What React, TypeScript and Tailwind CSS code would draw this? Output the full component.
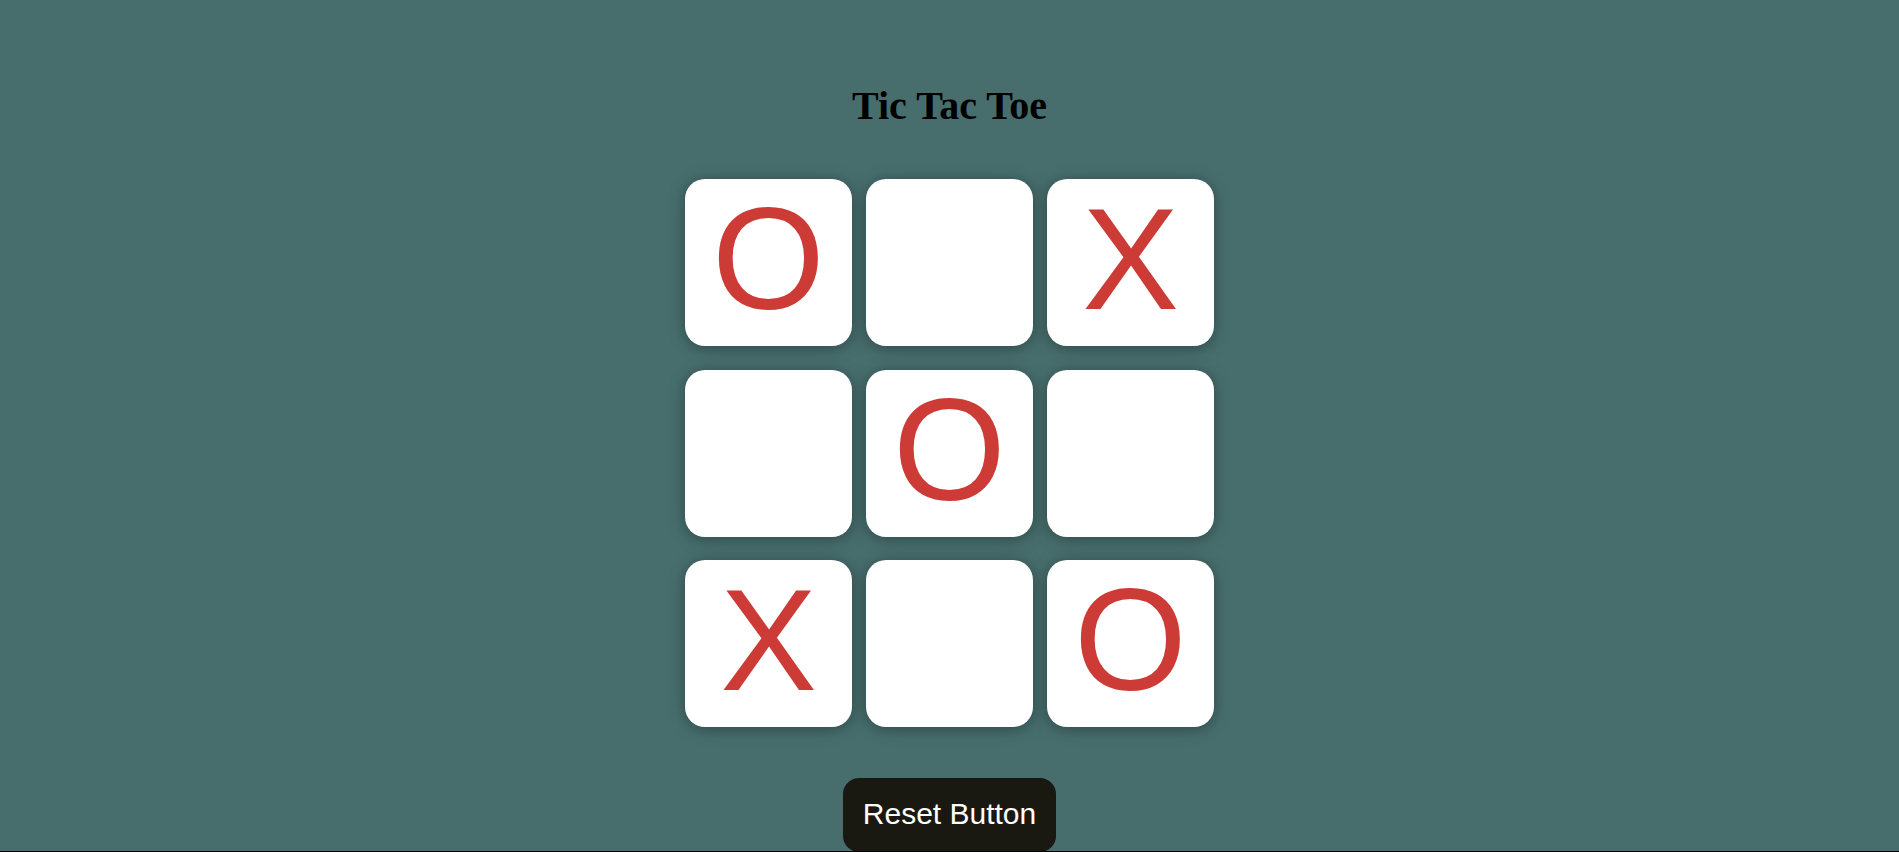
import React from 'react';

type Mark = 'X' | 'O' | '';

const board: Mark[] = ['O', '', 'X', '', 'O', '', 'X', '', 'O'];

const Cell: React.FC<{ value: Mark }> = ({ value }) => {
  return (
    <button className="w-[167px] h-[167px] pb-[5px] bg-white rounded-[20px] shadow-[0_2px_16px_rgba(0,0,0,0.35)] flex items-center justify-center text-[145px] leading-normal text-[#cd3b37] font-['Liberation_Sans',Arial,sans-serif]">
      {value}
    </button>
  );
};

const App: React.FC = () => {
  return (
    <div className="h-[852px] overflow-hidden border-b border-black bg-[#476e6d] flex flex-col items-center pt-[76px]">
      <h1 className="text-[40px] leading-normal font-bold text-black font-['Liberation_Serif','Times_New_Roman',serif]">
        Tic Tac Toe
      </h1>
      <div className="mt-[43px] grid grid-cols-[repeat(3,167px)] gap-x-[14px] gap-y-[23.5px]">
        {board.map((v, i) => (
          <Cell key={i} value={v} />
        ))}
      </div>
      <button className="mt-[51px] shrink-0 bg-[#191912] text-white rounded-[16px] px-[20px] pt-[13px] pb-[16px] text-[30px] leading-normal font-['Liberation_Sans',Arial,sans-serif]">
        Reset Button
      </button>
    </div>
  );
};

export default App;
